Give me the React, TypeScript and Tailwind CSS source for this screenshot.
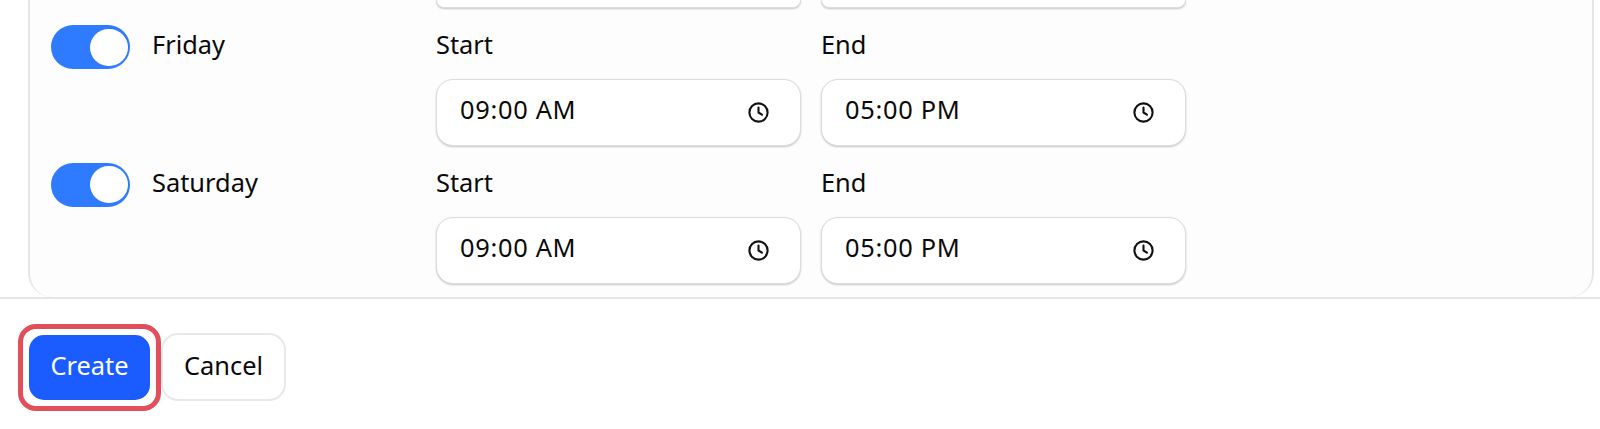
import React from "react";

function Clock() {
  return (
    <svg width="23" height="23" viewBox="0 0 24 24" fill="none" stroke="#111" strokeWidth="2.2" strokeLinecap="round" strokeLinejoin="round">
      <circle cx="12" cy="12" r="9.5" />
      <path d="M12 6.8V12l3.6 2.2" />
    </svg>
  );
}

function TimeField({ label, value }: { label: string; value: string }) {
  return (
    <div className="w-[365px] flex flex-col">
      <div className="h-[36px] mb-[16px] flex items-center text-[25.4px] leading-[36px] text-[#0a0a0a] pb-[2px]">{label}</div>
      <div className="h-[67px] rounded-[17px] bg-white border border-[#dcdcdc] shadow-[0_1px_2px_rgba(0,0,0,0.22)] pl-[23px] pr-[30px] flex items-center justify-between">
        <span className="text-[25.4px] tracking-[0.7px] text-[#0a0a0a] -mt-[6px]">{value}</span>
        <Clock />
      </div>
    </div>
  );
}

function Row({ day }: { day: string }) {
  return (
    <div className="flex items-start h-[137.5px]">
      <div className="w-[385px] flex items-center h-[44px] -mt-[2px]">
        <div className="w-[79px] h-[44px] rounded-full bg-[#2f7bff] flex items-center justify-end pr-[2px] shrink-0">
          <div className="w-[38px] h-[37px] rounded-full bg-white" />
        </div>
        <span className="ml-[22px] -mt-[6px] text-[25.4px] leading-[36px] text-[#0a0a0a]">{day}</span>
      </div>
      <div className="flex gap-[20px]">
        <TimeField label="Start" value="09:00 AM" />
        <TimeField label="End" value="05:00 PM" />
      </div>
    </div>
  );
}

function Stub() {
  return <div className="w-[365px] h-[8px] bg-white border border-t-0 border-[#dcdcdc] rounded-b-[17px] shadow-[0_1px_2px_rgba(0,0,0,0.22)]" />;
}

export default function App() {
  return (
    <div className="w-[1600px] h-[429px] bg-white overflow-hidden flex flex-col" style={{ fontFamily: '"Noto Sans", sans-serif' }}>
      <div className="h-[299px] shrink-0 border-b-2 border-[#e6e6e6] pl-[28px] pr-[6px]">
        <div className="h-[297px] bg-[#fdfdfe] border-x-2 border-[#e6e6e6] rounded-b-[24px] pl-[21px]">
          <div className="flex pl-[385px] gap-[20px] mb-[19px]">
            <Stub />
            <Stub />
          </div>
          <Row day="Friday" />
          <Row day="Saturday" />
        </div>
      </div>
      <div className="flex items-start pl-[18px] pt-[25px]">
        <div className="border-[5px] border-[#e04f5a] rounded-[18px] p-[6px] bg-white">
          <button className="block w-[121px] h-[65px] rounded-[15px] bg-[#1a5cff] text-white text-[25.4px] pb-[4px]">Create</button>
        </div>
        <button className="mt-[9px] w-[125px] h-[68px] rounded-[17px] bg-white border-2 border-[#e8e8e8] text-[25.4px] text-[#0a0a0a] pb-[4px]">Cancel</button>
      </div>
    </div>
  );
}
